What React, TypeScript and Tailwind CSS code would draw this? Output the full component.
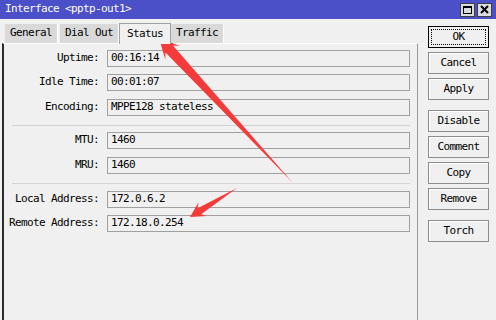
const mono = "font-['DejaVu_Sans_Mono',monospace] text-[11px] tracking-[-0.62px]";

const Field = ({ label, value, className = "" }: { label: string; value: string; className?: string }) => (
  <div className={`flex items-center h-[17px] ${className}`}>
    <div className="w-[96px] text-right pr-[1px] text-black">{label}</div>
    <div className="ml-[7px] flex-1 h-full border border-[#a0a0a0] bg-[#f0f0f0] flex items-center pl-[3px] text-black">
      {value}
    </div>
  </div>
);

const Btn = ({ label, focus = false, className = "" }: { label: string; focus?: boolean; className?: string }) => (
  <div
    className={`relative w-[61px] h-[22px] flex items-center justify-center bg-[#f0f0f0] text-black ${
      focus ? "border border-black" : "border border-[#8c8c8c] shadow-[inset_1px_1px_0_#ffffff]"
    } ${className}`}
  >
    {focus && <div className="absolute inset-[2px] border border-dotted border-black" />}
    <span className="relative">{label}</span>
  </div>
);

const Tab = ({ label, active = false }: { label: string; active?: boolean }) => (
  <div
    className={
      active
        ? "h-[21px] -mb-px px-[7px] flex items-center bg-[#f0f0f0] border-l border-t border-r border-[#a0a0a0] text-black relative z-10"
        : "h-[19px] px-[5px] flex items-center bg-[#d9d9d9] border-r border-[#ffffff] text-black"
    }
  >
    {label}
  </div>
);

export default function App() {
  return (
    <div className={`relative w-[496px] h-[320px] overflow-hidden bg-[#f0f0f0] flex flex-col ${mono}`}>
      <div className="h-[19px] bg-[#4b4fc8] flex items-center pl-[5px] pr-[4px]">
        <span className="text-white">Interface &lt;pptp-out1&gt;</span>
        <div className="ml-auto flex gap-[2px]">
          <div className="w-[15px] h-[14px] bg-[#dcdcdc] border border-[#404040] flex items-center justify-center">
            <div className="w-[9px] h-[8px] border border-t-2 border-black" />
          </div>
          <div className="w-[15px] h-[14px] bg-[#dcdcdc] border border-[#404040] flex items-center justify-center">
            <svg width="9" height="9" viewBox="0 0 9 9">
              <path d="M1 1 L8 8 M8 1 L1 8" stroke="#000" strokeWidth="2" />
            </svg>
          </div>
        </div>
      </div>

      <div className="flex flex-1">
        <div className="w-[418px] flex flex-col">
          <div className="flex items-end pl-[5px] h-[24px]">
            <Tab label="General" />
            <div className="w-[2px]" />
            <Tab label="Dial Out" />
            <Tab label="Status" active />
            <Tab label="Traffic" />
          </div>
          <div className="flex-1 ml-[2px] border-l-2 border-l-[#2a2a2a] border-r border-r-[#9a9a9a] border-t border-t-[#ffffff] pt-[6px] pr-[7px]">
            <Field label="Uptime:" value="00:16:14" />
            <Field label="Idle Time:" value="00:01:07" className="mt-[7px]" />
            <Field label="Encoding:" value="MPPE128 stateless" className="mt-[8px]" />
            <div className="ml-[8px] mt-[9px] h-px bg-[#d4d4d4]" />
            <Field label="MTU:" value="1460" className="mt-[6px]" />
            <Field label="MRU:" value="1460" className="mt-[8px]" />
            <div className="ml-[8px] mt-[9px] h-px bg-[#d4d4d4]" />
            <Field label="Local Address:" value="172.0.6.2" className="mt-[7px]" />
            <Field label="Remote Address:" value="172.18.0.254" className="mt-[7px]" />
          </div>
        </div>

        <div className="flex-1 flex flex-col pl-[10px] pt-[7px]">
          <Btn label="OK" focus />
          <Btn label="Cancel" className="mt-[4px]" />
          <Btn label="Apply" className="mt-[4px]" />
          <Btn label="Disable" className="mt-[10px]" />
          <Btn label="Comment" className="mt-[4px]" />
          <Btn label="Copy" className="mt-[4px]" />
          <Btn label="Remove" className="mt-[4px]" />
          <Btn label="Torch" className="mt-[10px]" />
        </div>
      </div>

      <svg className="absolute inset-0 pointer-events-none" width="496" height="320" viewBox="0 0 496 320">
        <polygon
          points="159,38 179.9,45.9 172.9,45.6 293,183 165.5,52.4 165.3,59.5"
          fill="#f43b3b"
        />
        <polygon
          points="190,217 198.6,202.3 197.6,208.2 237,188 201.2,214.2 207,215.9"
          fill="#f43b3b"
        />
      </svg>
    </div>
  );
}
